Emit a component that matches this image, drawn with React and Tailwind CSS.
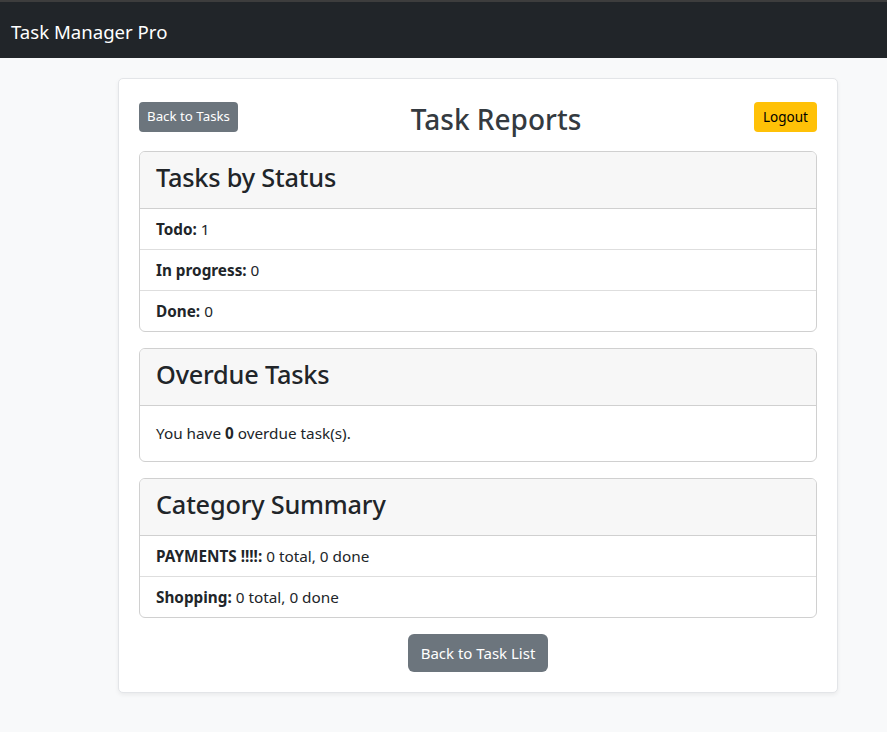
import React from "react";

const font = { fontFamily: '"Noto Sans", "Open Sans", sans-serif' };

function Card({ title, children }) {
  return (
    <div className="rounded-[6px] border border-[#d0d0d0] bg-white overflow-hidden">
      <div className="h-[57px] flex items-center px-4 pb-[5px] bg-[#f7f7f7] border-b border-[#d0d0d0]">
        <h3 className="text-[25.3px] leading-none text-[#212529] font-medium tracking-[-0.2px]">{title}</h3>
      </div>
      {children}
    </div>
  );
}

function Item({ label, value, last }) {
  return (
    <div className={"flex items-center px-4 text-[15.3px] text-[#212529] " + (last ? "h-[40px]" : "h-[41px] border-b border-[#dedede]")}>
      <span className="font-bold">{label}</span>
      <span>&nbsp;{value}</span>
    </div>
  );
}

export default function App() {
  return (
    <div className="min-h-[732px] bg-[#f8f9fa]" style={font}>
      <div className="h-[2px] bg-[#3d3d3d]" />
      <nav className="h-[56px] bg-[#212529] flex items-center px-[11px] pt-[3px]">
        <span className="text-white text-[18.6px]">Task Manager Pro</span>
      </nav>
      <div className="pt-[20px] pl-[118px] pr-[49px]">
        <div className="w-[720px] bg-white border border-[#e3e5e8] rounded-[5px] shadow-[0_2px_4px_rgba(0,0,0,0.06)] px-5 pt-5 pb-5">
          <div className="h-[36px] flex items-center justify-between mb-4">
            <button className="h-[30px] px-[8px] rounded-[4px] bg-[#6c757d] text-white text-[13.3px]">Back to Tasks</button>
            <h2 className="text-[28px] leading-none text-[#343a40] font-medium pt-[3px]">Task Reports</h2>
            <button className="h-[30px] px-[9px] rounded-[4px] bg-[#ffc107] text-black text-[13.5px]">Logout</button>
          </div>
          <div className="flex flex-col gap-[16px]">
            <Card title="Tasks by Status">
              <Item label="Todo:" value="1" />
              <Item label="In progress:" value="0" />
              <Item label="Done:" value="0" last />
            </Card>
            <Card title="Overdue Tasks">
              <div className="h-[55px] flex items-center px-4 text-[15.3px] text-[#212529]">
                <span>You have <b className="font-bold">0</b> overdue task(s).</span>
              </div>
            </Card>
            <Card title="Category Summary">
              <Item label="PAYMENTS !!!!:" value="0 total, 0 done" />
              <Item label="Shopping:" value="0 total, 0 done" last />
            </Card>
          </div>
          <div className="flex justify-center mt-[16px]">
            <button className="h-[38px] px-[13px] rounded-[6px] bg-[#6c757d] text-white text-[15px]">Back to Task List</button>
          </div>
        </div>
      </div>
    </div>
  );
}
